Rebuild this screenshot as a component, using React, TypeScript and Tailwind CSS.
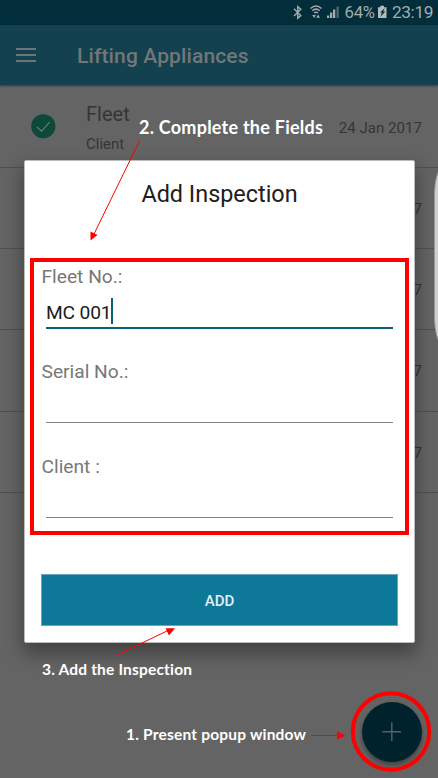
import React from "react";

const rows = [
  { title: "Fleet", subtitle: "Client", date: "24 Jan 2017" },
  { date: "24 Jan 2017" },
  { date: "24 Jan 2017" },
  { date: "24 Jan 2017" },
  { date: "24 Jan 2017" },
];

function StatusBar() {
  return (
    <div className="relative h-[25px] bg-[#022d3b] text-[#a3abad]">
      <svg className="absolute left-0 top-0" width="438" height="25" viewBox="0 0 438 25" fill="none">
        <path d="M294 8.7 L300.8 15.6 L297.7 18.2 V6.6 L300.8 9.2 L294 15.9" stroke="currentColor" strokeWidth="1.4" />
        <path d="M310.5 8.5 Q316 3.5 321.5 8.5 M312.3 10.7 Q316 7.5 319.7 10.7 M314.2 12.8 Q316 11.5 317.8 12.8" stroke="currentColor" strokeWidth="1.5" />
        <path d="M312.2 15 H316 L314.1 18 Z M316.2 17.7 H320 L318.1 14.4 Z" fill="currentColor" />
        <path d="M327 15.5 H329.3 V18 H327 Z M330 12.5 H332.3 V18 H330 Z M333 9.5 H335.3 V18 H333 Z" fill="currentColor" />
        <path d="M336.5 6.5 H338.8 V18 H336.5 Z" fill="#52686f" />
        <path d="M380.3 5.8 H384 V7.3 H386.5 V18 H378 V7.3 H380.3 Z" fill="#b5babb" />
        <path d="M384.8 8 L380 12.6 H382 L380.3 17 L385.3 11.5 H383.2 Z" fill="#022d3b" />
      </svg>
      <span className="absolute left-[344.5px] top-[2px] text-[16.7px] leading-[21px] tracking-[-0.2px]">64%</span>
      <span className="absolute left-[392px] top-[2px] text-[17.3px] leading-[21px] tracking-[-0.4px]">23:19</span>
    </div>
  );
}

function Header() {
  return (
    <header className="relative z-10 flex h-[60px] items-center bg-[#13414f] pl-4 shadow-[0_1px_2px_rgba(0,0,0,0.45)]">
      <div className="-mt-px flex w-5 flex-col gap-[4px]">
        <i className="h-[2px] bg-[#6b7679]" />
        <i className="h-[2px] bg-[#6b7679]" />
        <i className="h-[2px] bg-[#6b7679]" />
      </div>
      <h1 className="ml-[41px] mt-[2px] text-[21px] font-medium leading-6 tracking-[0.13px] text-[#727779]">Lifting Appliances</h1>
    </header>
  );
}

function InspectionRow({ title, subtitle, date }: { title?: string; subtitle?: string; date: string }) {
  return (
    <li className="flex h-[81.25px] items-center justify-end border-b border-[#505050] pl-[31px] pr-4 text-[#353535]">
      {title && (
        <>
          <svg className="shrink-0" width="25" height="25" viewBox="0 0 25 25" fill="none">
            <circle cx="12.3" cy="12.3" r="12.1" fill="#0c4938" />
            <path d="M5.8 12.8 L10.6 17.2 L18.7 8" stroke="#72817c" strokeWidth="1.1" />
          </svg>
          <div className="ml-[30px] mt-[2px] flex-1">
            <div className="text-[20px] leading-6">{title}</div>
            <div className="mt-[8px] text-[15px] leading-5">{subtitle}</div>
          </div>
        </>
      )}
      <span className="mt-[2px] text-[15px] leading-5 tracking-[0.05px]">{date}</span>
    </li>
  );
}

function Field({ label, value, focused = false }: { label: string; value?: string; focused?: boolean }) {
  return (
    <div className="h-[95px]">
      <label className="block pl-[0.5px] text-[19.2px] leading-6 text-[#777777]">{label}</label>
      <div className={`ml-[5px] mr-[5px] mt-[6px] flex items-start ${focused ? "h-[34px] border-b-2 border-[#09607d]" : "h-[33px] border-b border-[#828282]"}`}>
        {value && <span className="mt-[6px] text-[19.2px] leading-6 tracking-[-0.15px] text-[#202020]">{value}</span>}
        {focused && <i className="mt-[3px] h-[26px] w-[2px] bg-[#09607d]" />}
      </div>
    </div>
  );
}

function Dialog() {
  return (
    <section className="absolute left-[24px] top-[160px] z-20 flex h-[483px] w-[391px] flex-col rounded-[2px] border border-[#bcbcbc] bg-white px-4 shadow-[0_9px_18px_2px_rgba(0,0,0,0.34)]">
      <h2 className="mt-[19px] text-center text-[23.4px] leading-[28px] text-[#202020]">Add Inspection</h2>
      <div className="mt-[57px]">
        <Field label="Fleet No.:" value="MC 001" focused />
        <Field label="Serial No.:" />
        <Field label="Client :" />
      </div>
      <button className="mt-[24px] h-[52px] w-[357px] border border-[#66a7b9] bg-[#0e7899] pt-[3px] text-[15px] font-medium text-[#e3f0f4]">ADD</button>
    </section>
  );
}

function Annotations() {
  return (
    <div className="absolute inset-0 z-30 font-[Lato,'Liberation_Sans',sans-serif] font-bold text-white">
      <svg className="absolute inset-0" width="438" height="778" viewBox="0 0 438 778" fill="none">
        <rect x="32" y="260" width="375" height="273" stroke="#ff0000" strokeWidth="4" />
        <circle cx="391" cy="731.5" r="38.2" stroke="#ff0000" strokeWidth="4" />
        <path d="M139.5 141 L94 234 M118 654.5 L168 630.5 M311 735.5 H339" stroke="#ff0000" strokeWidth="1" />
        <path d="M90.5 240.5 V231.5 L97.5 235 Z M175 628.3 L165.5 628.2 L169 635.5 Z M345.5 735.5 L337 731.2 V739.8 Z" fill="#ff0000" />
      </svg>
      <span className="absolute left-[139px] top-[116px] whitespace-nowrap text-[18px] leading-[22px] tracking-[0.24px]">2. Complete the Fields</span>
      <span className="absolute left-[42px] top-[659px] whitespace-nowrap text-[15.5px] leading-5 tracking-[0.18px]">3. Add the Inspection</span>
      <span className="absolute left-[126px] top-[724px] whitespace-nowrap text-[15.5px] leading-5 tracking-[0.2px]">1. Present popup window</span>
    </div>
  );
}

export default function App() {
  return (
    <main className="relative h-[778px] w-[438px] overflow-hidden bg-[#646464] font-[Roboto,'Liberation_Sans',sans-serif]">
      <StatusBar />
      <Header />
      <ul className="pt-[1.5px]">
        {rows.map((row, index) => <InspectionRow key={index} {...row} />)}
      </ul>
      <div className="absolute left-[434px] top-[166px] h-[180px] w-[10px] rounded-l-[10px_30px] border-l border-[#999] bg-[#d0d0d0]" />
      <button className="absolute left-[362px] top-[702px] h-[60px] w-[60px] rounded-full bg-[#00222d] shadow-[0_3px_5px_rgba(0,0,0,0.35)]" aria-label="Add inspection">
        <svg width="60" height="60" viewBox="0 0 60 60" fill="none">
          <path d="M20.5 29.7 H39 M29.8 20.3 V39" stroke="#566369" strokeWidth="1.4" />
        </svg>
      </button>
      <Dialog />
      <Annotations />
    </main>
  );
}
